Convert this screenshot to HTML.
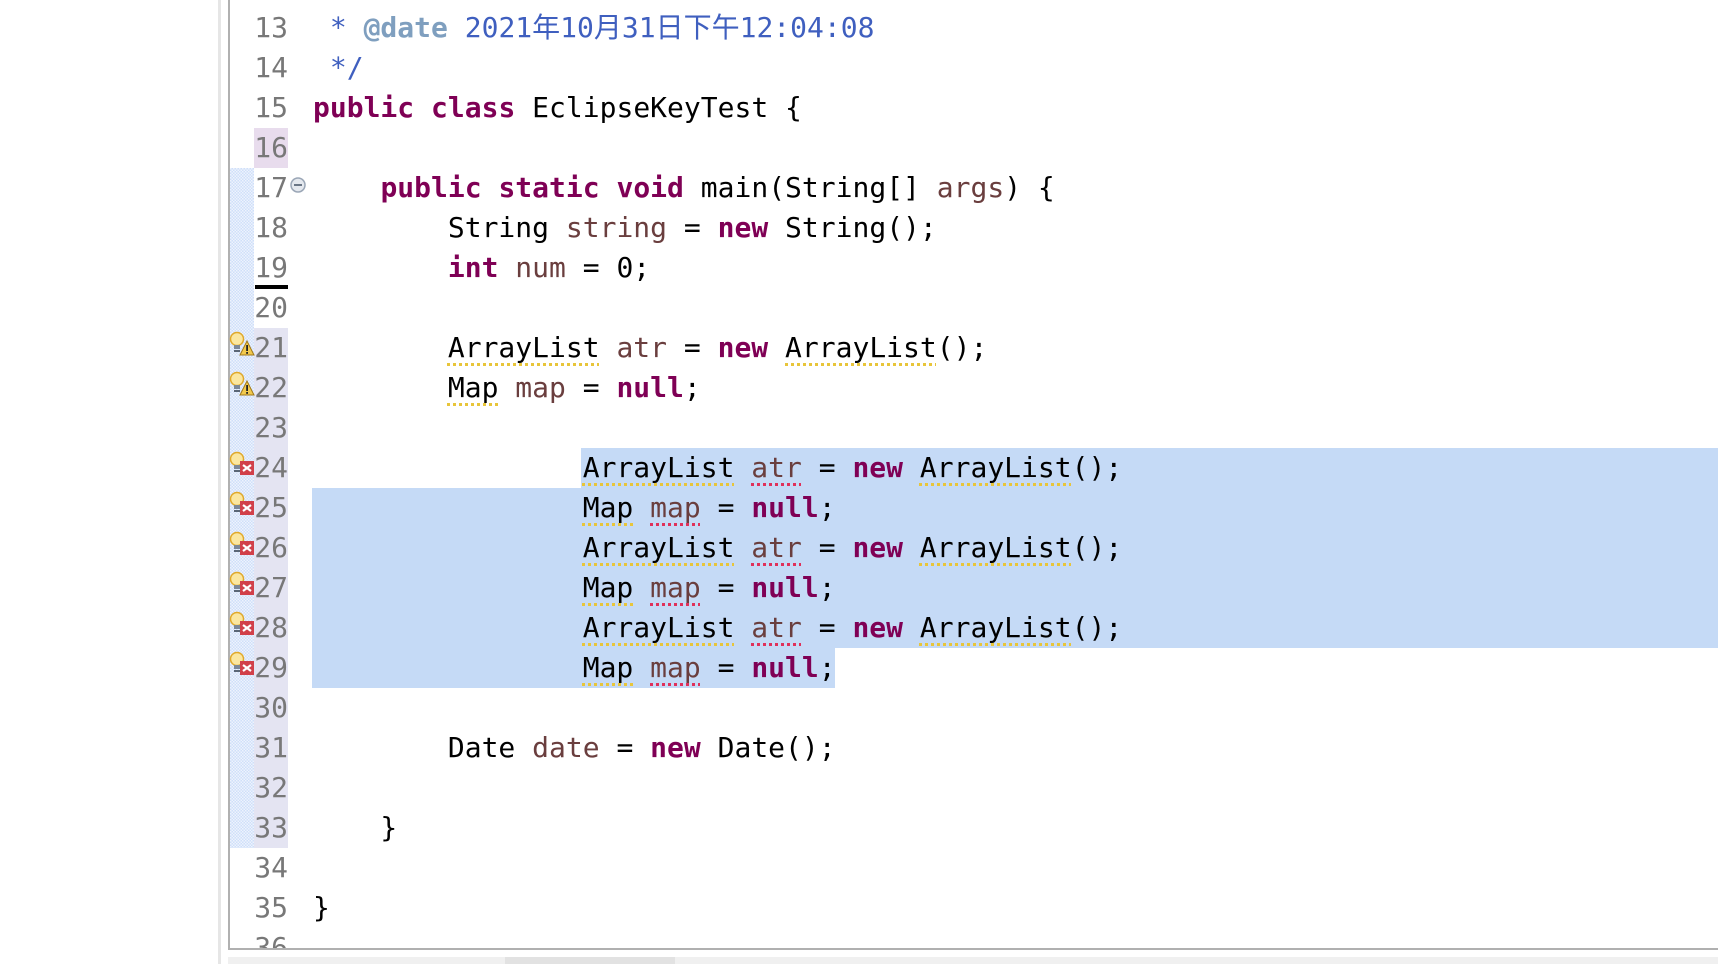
<!DOCTYPE html><html><head><meta charset="utf-8"><style>
body{margin:0;width:1718px;height:964px;background:#fff;position:relative;overflow:hidden;font-family:"DejaVu Sans Mono","Noto Sans CJK SC",monospace;}
.a{position:absolute}
.ln{position:absolute;left:240px;width:48px;text-align:right;font-size:28px;color:#787878;height:40px;line-height:40px}
.cd{position:absolute;left:313px;font-size:28px;line-height:40px;height:40px;white-space:pre;color:#000}
.k{color:#7f0055;font-weight:bold}.v{color:#6a3e3e}.c{color:#3f5fbf}.t{color:#7f9fbf;font-weight:bold}
.w{text-decoration:underline dotted #e8c53a 3px;text-underline-offset:6px}
.e{text-decoration:underline dotted #e0305a 3px;text-underline-offset:6px}
.ic{position:absolute;left:229px;width:26px;height:26px}
</style></head><body>
<div class="a" style="left:218px;top:0;width:3px;height:964px;background:#e6e6e6"></div>
<div class="a" style="left:228px;top:0;width:2px;height:950px;background:#b0b0b0"></div>
<div class="a" style="left:230px;top:168px;width:24px;height:680px;background:repeating-conic-gradient(#cfdff9 0 25%,#eef3fd 0 50%) 0 0/3px 3px"></div>
<div class="a" style="left:254px;top:128px;width:34px;height:40px;background:#e8dced"></div>
<div class="a" style="left:254px;top:328px;width:34px;height:520px;background:#e4e4f2"></div>
<div class="a" style="left:255px;top:285px;width:33px;height:4px;background:#000"></div>
<div class="a" style="left:581px;top:448px;width:1137px;height:40px;background:#c5daf6"></div>
<div class="a" style="left:312px;top:488px;width:1406px;height:160px;background:#c5daf6"></div>
<div class="a" style="left:312px;top:648px;width:523px;height:40px;background:#c5daf6"></div>
<div class="a" style="left:228px;top:948px;width:1490px;height:2px;background:#b0b0b0"></div>
<div class="a" style="left:228px;top:957px;width:1490px;height:7px;background:#f0f0f0"></div>
<div class="a" style="left:505px;top:957px;width:170px;height:7px;background:#e2e2e2"></div>

<div class="ln" style="top:8px">13</div><div class="ln" style="top:48px">14</div><div class="ln" style="top:88px">15</div><div class="ln" style="top:128px">16</div><div class="ln" style="top:168px">17</div><div class="ln" style="top:208px">18</div><div class="ln" style="top:248px">19</div><div class="ln" style="top:288px">20</div><div class="ln" style="top:328px">21</div><div class="ln" style="top:368px">22</div><div class="ln" style="top:408px">23</div><div class="ln" style="top:448px">24</div><div class="ln" style="top:488px">25</div><div class="ln" style="top:528px">26</div><div class="ln" style="top:568px">27</div><div class="ln" style="top:608px">28</div><div class="ln" style="top:648px">29</div><div class="ln" style="top:688px">30</div><div class="ln" style="top:728px">31</div><div class="ln" style="top:768px">32</div><div class="ln" style="top:808px">33</div><div class="ln" style="top:848px">34</div><div class="ln" style="top:888px">35</div><div class="ln" style="top:928px;height:20px;overflow:hidden">36</div>

<svg class="a" style="left:289px;top:176px" width="18" height="18"><circle cx="9" cy="9" r="7" fill="#e4e8ee" stroke="#9aa6b6" stroke-width="1.5"/><line x1="5" y1="9" x2="13" y2="9" stroke="#6a7686" stroke-width="2"/></svg>

<div class="cd" style="top:8px"> <span class="c">* </span><span class="t">@date</span><span class="c"> 2021年10月31日下午12:04:08</span></div>
<div class="cd" style="top:48px"> <span class="c">*/</span></div>
<div class="cd" style="top:88px"><span class="k">public</span> <span class="k">class</span> EclipseKeyTest {</div>
<div class="cd" style="top:168px">    <span class="k">public</span> <span class="k">static</span> <span class="k">void</span> main(String[] <span class="v">args</span>) {</div>
<div class="cd" style="top:208px">        String <span class="v">string</span> = <span class="k">new</span> String();</div>
<div class="cd" style="top:248px">        <span class="k">int</span> <span class="v">num</span> = 0;</div>
<div class="cd" style="top:328px">        <span class="w">ArrayList</span> <span class="v">atr</span> = <span class="k">new</span> <span class="w">ArrayList</span>();</div>
<div class="cd" style="top:368px">        <span class="w">Map</span> <span class="v">map</span> = <span class="k">null</span>;</div>
<div class="cd" style="top:448px">                <span class="w">ArrayList</span> <span class="e v">atr</span> = <span class="k">new</span> <span class="w">ArrayList</span>();</div>
<div class="cd" style="top:488px">                <span class="w">Map</span> <span class="e v">map</span> = <span class="k">null</span>;</div>
<div class="cd" style="top:528px">                <span class="w">ArrayList</span> <span class="e v">atr</span> = <span class="k">new</span> <span class="w">ArrayList</span>();</div>
<div class="cd" style="top:568px">                <span class="w">Map</span> <span class="e v">map</span> = <span class="k">null</span>;</div>
<div class="cd" style="top:608px">                <span class="w">ArrayList</span> <span class="e v">atr</span> = <span class="k">new</span> <span class="w">ArrayList</span>();</div>
<div class="cd" style="top:648px">                <span class="w">Map</span> <span class="e v">map</span> = <span class="k">null</span>;</div>
<div class="cd" style="top:728px">        Date <span class="v">date</span> = <span class="k">new</span> Date();</div>
<div class="cd" style="top:808px">    }</div>
<div class="cd" style="top:888px">}</div>

<svg width="0" height="0" style="position:absolute"><defs>
<g id="bulb"><circle cx="8" cy="8" r="6.5" fill="#fbe7a0" stroke="#e0a92a" stroke-width="1.5"/><rect x="5" y="14" width="6" height="4" fill="#7c8898"/><rect x="5" y="19" width="6" height="2" fill="#5a6676"/></g>
<g id="warn"><use href="#bulb"/><path d="M18 10 L25 24 L11 24 Z" fill="#f2c94c" stroke="#a07818" stroke-width="1"/><rect x="17.2" y="14" width="1.8" height="6" fill="#222"/><rect x="17.2" y="21" width="1.8" height="1.8" fill="#222"/></g>
<g id="err"><use href="#bulb"/><rect x="11" y="10" width="14" height="14" fill="#d1404a"/><path d="M14 14 L22 20 M22 14 L14 20" stroke="#fff" stroke-width="2.2"/></g>
</defs></svg>
<svg class="ic" style="top:331px"><use href="#warn"/></svg>
<svg class="ic" style="top:371px"><use href="#warn"/></svg>
<svg class="ic" style="top:451px"><use href="#err"/></svg>
<svg class="ic" style="top:491px"><use href="#err"/></svg>
<svg class="ic" style="top:531px"><use href="#err"/></svg>
<svg class="ic" style="top:571px"><use href="#err"/></svg>
<svg class="ic" style="top:611px"><use href="#err"/></svg>
<svg class="ic" style="top:651px"><use href="#err"/></svg>
</body></html>
